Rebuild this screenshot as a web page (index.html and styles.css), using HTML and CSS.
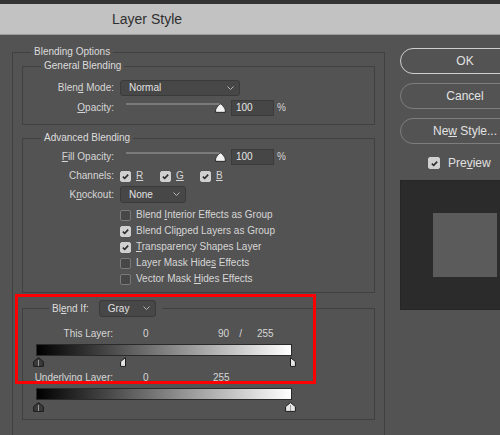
FILE: index.html
```html
<!DOCTYPE html>
<html lang="en">
<head>
    <meta charset="UTF-8">
    <title>Layer Style</title>
    <link rel="stylesheet" href="styles.css">
</head>
<body>
    <div class="topbar"></div>
    <div class="titlebar">Layer Style</div>

    <div class="main">
        <fieldset class="group outer">
            <legend>Blending Options</legend>

            <fieldset class="group general">
                <legend>General Blending</legend>
                <div class="row r-mode">
                    <span class="lbl">Blen<u>d</u> Mode:</span>
                    <div class="select sel-mode"><span>Normal</span>
                        <svg width="7" height="5" viewBox="0 0 7 5"><polyline points="0.5,0.5 3.5,3.5 6.5,0.5" /></svg>
                    </div>
                </div>
                <div class="row r-slider">
                    <span class="lbl"><u>O</u>pacity:</span>
                    <div class="slider">
                        <span class="track"></span>
                        <svg class="knob" width="11" height="10" viewBox="0 0 11 10"><path d="M5.5 0.8 C6.6 0.8 10.4 5.5 10.4 7.2 V9.4 H0.6 V7.2 C0.6 5.5 4.4 0.8 5.5 0.8 Z" /></svg>
                    </div>
                    <div class="num">100</div><span class="pct">%</span>
                </div>
            </fieldset>

            <fieldset class="group advanced">
                <legend>Advanced Blending</legend>
                <div class="row r-fill">
                    <span class="lbl"><u>F</u>ill Opacity:</span>
                    <div class="slider">
                        <span class="track"></span>
                        <svg class="knob" width="11" height="10" viewBox="0 0 11 10"><path d="M5.5 0.8 C6.6 0.8 10.4 5.5 10.4 7.2 V9.4 H0.6 V7.2 C0.6 5.5 4.4 0.8 5.5 0.8 Z" /></svg>
                    </div>
                    <div class="num">100</div><span class="pct">%</span>
                </div>
                <div class="row r-chan">
                    <span class="lbl">Channels:</span>
                    <span class="chan"><span class="cb on"><svg width="9" height="9" viewBox="0 0 9 9"><polyline points="1.8,4.6 3.7,6.4 7.2,2.6" /></svg></span><u>R</u></span>
                    <span class="chan"><span class="cb on"><svg width="9" height="9" viewBox="0 0 9 9"><polyline points="1.8,4.6 3.7,6.4 7.2,2.6" /></svg></span><u>G</u></span>
                    <span class="chan"><span class="cb on"><svg width="9" height="9" viewBox="0 0 9 9"><polyline points="1.8,4.6 3.7,6.4 7.2,2.6" /></svg></span><u>B</u></span>
                </div>
                <div class="row r-knock">
                    <span class="lbl">K<u>n</u>ockout:</span>
                    <div class="select sel-knock"><span>None</span>
                        <svg width="7" height="5" viewBox="0 0 7 5"><polyline points="0.5,0.5 3.5,3.5 6.5,0.5" /></svg>
                    </div>
                </div>
                <div class="checks">
                    <div class="check"><span class="cb"></span><span>Blend <u>I</u>nterior Effects as Group</span></div>
                    <div class="check"><span class="cb on"><svg width="9" height="9" viewBox="0 0 9 9"><polyline points="1.8,4.6 3.7,6.4 7.2,2.6" /></svg></span><span>Blend Cli<u>p</u>ped Layers as Group</span></div>
                    <div class="check"><span class="cb on"><svg width="9" height="9" viewBox="0 0 9 9"><polyline points="1.8,4.6 3.7,6.4 7.2,2.6" /></svg></span><span><u>T</u>ransparency Shapes Layer</span></div>
                    <div class="check"><span class="cb"></span><span>Layer Mask Hide<u>s</u> Effects</span></div>
                    <div class="check"><span class="cb"></span><span>Vector Mask <u>H</u>ides Effects</span></div>
                </div>
            </fieldset>

            <fieldset class="group blendif">
                <legend>
                    <span class="bi-label">Bl<u>e</u>nd If:</span>
                    <div class="select sel-gray"><span>Gray</span>
                        <svg width="7" height="5" viewBox="0 0 7 5"><polyline points="0.5,0.5 3.5,3.5 6.5,0.5" /></svg>
                    </div>
                </legend>

                <div class="vals">
                    <span class="vlbl">This Layer:</span>
                    <span class="lo">0</span>
                    <span class="hi">90</span>
                    <span class="slash">/</span>
                    <span class="hi2">255</span>
                </div>
                <div class="ramp"></div>
                <div class="thumbs">
                    <svg class="th th-dark" style="left:10px" width="11" height="10" viewBox="0 0 11 10"><path d="M5.5 0.6 L10.4 4.6 V9.4 H0.6 V4.6 Z" /><line x1="5.5" y1="3" x2="5.5" y2="9" /></svg>
                    <svg class="th th-light" style="left:97px" width="6" height="10" viewBox="0 0 6 10"><path d="M5.5 0.6 L0.6 4.6 V9.4 H5.5 Z" /></svg>
                    <svg class="th th-light" style="left:267px" width="6" height="10" viewBox="0 0 6 10"><path d="M0.5 0.6 L5.4 4.6 V9.4 H0.5 Z" /></svg>
                </div>

                <div class="vals under">
                    <span class="vlbl">Underlying Layer:</span>
                    <span class="lo">0</span>
                    <span class="hi">255</span>
                </div>
                <div class="ramp"></div>
                <div class="thumbs">
                    <svg class="th th-dark" style="left:10px" width="11" height="10" viewBox="0 0 11 10"><path d="M5.5 0.6 L10.4 4.6 V9.4 H0.6 V4.6 Z" /><line x1="5.5" y1="3" x2="5.5" y2="9" /></svg>
                    <svg class="th th-light" style="left:262px" width="11" height="10" viewBox="0 0 11 10"><path d="M5.5 0.6 L10.4 4.6 V9.4 H0.6 V4.6 Z" /><line x1="5.5" y1="3" x2="5.5" y2="9" /></svg>
                </div>
            </fieldset>
        </fieldset>

        <div class="side">
            <div class="btn default">OK</div>
            <div class="btn">Cancel</div>
            <div class="btn">Ne<u>w</u> Style...</div>
            <div class="preview-row">
                <span class="cb on big"><svg width="9" height="9" viewBox="0 0 9 9"><polyline points="1.8,4.6 3.7,6.4 7.2,2.6" /></svg></span><span>Pre<u>v</u>iew</span>
            </div>
            <div class="preview-box"><div class="swatch"></div></div>
        </div>
    </div>

    <div class="highlight"></div>
</body>
</html>
```

FILE: styles.css
```css
* { box-sizing: border-box; margin: 0; padding: 0; }
body { background: #535353; color: #d6d6d6; font: 10px/14px "Liberation Sans", Arial, sans-serif;
       height: 435px; overflow: hidden; position: relative; }
u { text-decoration: underline; text-underline-offset: 1px; }

.topbar { height: 4px; background: #333333; }
.titlebar { height: 31px; background: #c2c2c2; border-bottom: 1px solid #9c9c9c; color: #2f2f2f;
            font-size: 14px; line-height: 30px; padding-left: 112px; }

/* the dialog is wider than the window, the right column gets cut off */
.main { display: flex; align-items: flex-start; padding-left: 12px; width: 500px; height: 400px; overflow: hidden; }

/* group boxes */
.group { border: 1px solid #404040; min-width: 0; }
.group > legend { padding: 0 3px; line-height: 14px; color: #dcdcdc; }
.outer { flex: none; width: 373px; height: 390px; margin-top: 10px; padding: 0 9px; border-bottom: none; }
.outer > legend { margin-left: 9px; }
.general > legend, .advanced > legend { margin-left: 18px; }
.general { padding-bottom: 8px; }
.advanced { margin-top: 6px; padding-bottom: 5px; }
.blendif { margin-top: 7px; padding-bottom: 7px; }
.blendif > legend { display: flex; align-items: center; margin-left: 26px; padding: 0 6px 0 3px; line-height: 17px; }

/* rows */
.row { display: flex; align-items: center; height: 16px; }
.lbl { width: 91px; margin-right: 6px; text-align: right; flex: none; }
.r-mode { margin-top: 7px; }
.r-slider { margin-top: 4px; }
.r-fill { margin-top: 4px; }
.r-chan { margin-top: 3px; }
.r-knock { margin-top: 2px; height: 17px; }

.select { display: flex; align-items: center; justify-content: space-between; height: 16px;
          background: #474747; border: 1px solid #3a3a3a; border-radius: 3px; padding: 0 5px 0 8px; color: #e2e2e2; }
.select svg polyline { fill: none; stroke: #b5b5b5; stroke-width: 1; }
.sel-mode { width: 120px; }
.sel-knock { width: 66px; height: 17px; }
.sel-gray { width: 57px; height: 17px; margin-left: 10px; }

.slider { display: flex; align-items: flex-start; width: 106px; height: 16px; padding: 3px 0 0 6px; }
.track { width: 95px; height: 2px; background: #7a7a7a; }
.knob { margin-left: -5px; }
.knob path { fill: #f2f2f2; stroke: #262626; stroke-width: 1; }
.num { width: 43px; height: 16px; margin-left: 5px; padding-left: 4px; background: #464646;
       border: 1px solid #3b3b3b; color: #e6e6e6; line-height: 14px; }
.pct { margin-left: 3px; }

.cb { display: inline-flex; align-items: center; justify-content: center; width: 11px; height: 11px;
      border: 1px solid #7a7a7a; border-radius: 2px; background: #474747; margin-right: 5px; flex: none; }
.cb.on { background: #d0d0d0; border-color: #d0d0d0; }
.cb svg polyline { fill: none; stroke: #2e2e2e; stroke-width: 1.6; }
.chan { display: inline-flex; align-items: center; width: 40px; }

.checks { margin-top: 4px; padding-left: 97px; }
.check { display: flex; align-items: center; height: 16px; }

/* blend if */
.vals { display: flex; height: 14px; margin-top: 10px; }
.vals.under { margin-top: 4px; }
.vlbl { width: 90px; text-align: right; flex: none; }
.lo { width: 75px; margin-left: 30px; }
.under .lo { width: 70px; }
.slash { margin-left: 10px; }
.hi2 { margin-left: 15px; }
.ramp { width: 256px; height: 12px; margin: 3px 0 0 13px; border: 1px solid #2a2a2a;
        background: linear-gradient(to right, #000000, #ffffff); }
.thumbs { position: relative; height: 10px; margin-top: 1px; }
.under + .ramp + .thumbs { margin-top: 2px; }
.th { position: absolute; top: 0; }
.th path { stroke: #1c1c1c; stroke-width: 1; }
.th line { stroke: #9a9a9a; stroke-width: 1; }
.th-dark path { fill: #3a3a3a; }
.th-light path { fill: #e6e6e6; }

/* right column */
.side { width: 130px; margin-left: 15px; padding-top: 13px; display: flex; flex-direction: column; gap: 9px; flex: none; }
.btn { height: 26px; border: 1px solid #7e7e7e; border-radius: 13px; text-align: center;
       font-size: 12px; line-height: 24px; color: #e2e2e2; }
.btn.default { border-color: #cfcfcf; }
.preview-row { display: flex; align-items: center; height: 16px; margin-top: 2px; padding-left: 28px; font-size: 12px; color: #e0e0e0; }
.cb.big { width: 12px; height: 12px; margin-right: 8px; }
.preview-box { height: 130px; display: flex; align-items: center; justify-content: center;
               background: #2b2b2b; border: 1px solid #262626; }
.swatch { width: 64px; height: 64px; background: #5b5b5b; }

.highlight { position: absolute; left: 15px; top: 294px; width: 301px; height: 90px; border: 3px solid #ff0000; }
```
